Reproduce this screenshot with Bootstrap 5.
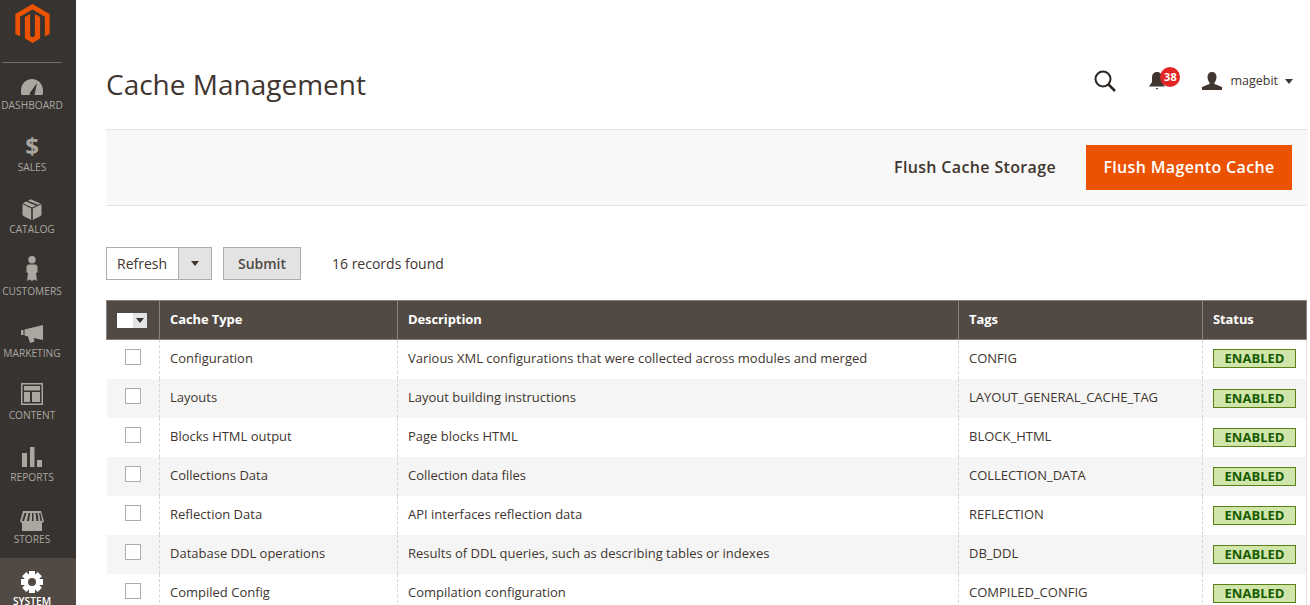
<!DOCTYPE html>
<html lang="en">
<head>
  <meta charset="UTF-8">
  <title>Cache Management</title>
  <link rel="stylesheet" href="https://cdn.jsdelivr.net/npm/bootstrap@5.3.0/dist/css/bootstrap.min.css">
  <style>
    html, body {
      height: 605px;
      overflow: hidden;
    }
    body {
      font-family: "Open Sans", sans-serif;
      font-size: 13px;
      color: #41362f;
      background: #fff;
    }
    .side-menu {
      width: 76px;
      height: 605px;
      background: #373330;
      flex-shrink: 0;
    }
    .side-logo {
      height: 63px;
      margin: 0 14px -1px 2px;
      padding-top: 4px;
      border-bottom: 1px solid #736d69;
    }
    .side-logo svg {
      display: block;
      margin-left: 13px;
    }
    .side-item {
      height: 62px;
      padding: 10px 12px 0 0;
      color: #aaa6a0;
      font-size: 10.2px;
      line-height: 14px;
      text-align: center;
      white-space: nowrap;
      text-decoration: none;
    }
    .side-item svg, .side-dollar {
      display: block;
      margin: 0 auto 2px;
      overflow: visible;
    }
    .side-dollar {
      height: 24px;
      font-size: 24px;
      font-weight: 700;
      line-height: 24px;
    }
    .side-active {
      background: #514943;
      color: #fff;
      font-weight: 600;
    }
    .main-area {
      width: 1231px;
      padding-left: 30px;
    }
    .head-row {
      height: 129px;
      padding-top: 64px;
    }
    .head-title {
      font-size: 28px;
      font-weight: 400;
      line-height: 40px;
      margin: 0;
      color: #41362f;
    }
    .head-tools {
      margin-right: 14px;
      margin-top: 5px;
    }
    .note-wrap {
      margin-left: 30px;
      margin-right: 36px;
      left: 1px;
    }
    .note-count {
      position: absolute;
      top: -4px;
      left: 12px;
      width: 20px;
      height: 20px;
      border-radius: 50%;
      background: #e22626;
      color: #fff;
      font-size: 11px;
      font-weight: 700;
      line-height: 20px;
      text-align: center;
    }
    .user-name {
      margin: 0 7px;
      font-size: 12.5px;
      color: #41362f;
    }
    .caret-down {
      width: 0;
      height: 0;
      border-left: 4px solid transparent;
      border-right: 4px solid transparent;
      border-top: 5px solid #41362f;
    }
    .action-bar {
      height: 77px;
      background: #f8f8f8;
      border-top: 1px solid #e3e3e3;
      border-bottom: 1px solid #e3e3e3;
      padding-right: 15px;
    }
    .flush-link {
      font-size: 16px;
      font-weight: 600;
      letter-spacing: .35px;
      color: #41362f;
      margin-right: 30px;
      padding-bottom: 2px;
    }
    .flush-main {
      width: 206px;
      height: 45px;
      padding: 0 0 2px;
      background: #eb5202;
      border: 1px solid #eb5202;
      color: #fff;
      font-size: 16px;
      font-weight: 600;
      letter-spacing: .35px;
      border-radius: 0;
    }
    .mass-row {
      height: 94px;
      padding-top: 41px;
    }
    .mass-select {
      width: 106px;
      height: 33px;
      border: 1px solid #adadad;
      background: #fff;
      font-size: 14px;
    }
    .mass-label {
      width: 71px;
      padding-left: 10px;
      line-height: 31px;
    }
    .mass-arrow {
      width: 33px;
      background: #e3e3e3;
      border-left: 1px solid #adadad;
    }
    .mass-submit {
      width: 78px;
      height: 33px;
      margin-left: 11px;
      padding: 0;
      background: #e3e3e3;
      border: 1px solid #adadad;
      border-radius: 0;
      color: #514943;
      font-size: 14px;
      font-weight: 600;
    }
    .records-text {
      margin-left: 31px;
      font-size: 14px;
      line-height: 33px;
    }
    .cache-grid {
      width: 1201px;
      table-layout: fixed;
      border-collapse: collapse;
      margin: 0;
    }
    .cache-grid th {
      height: 39px;
      padding: 0 10px;
      background: #514943;
      color: #fff;
      font-size: 13px;
      font-weight: 700;
      letter-spacing: -.1px;
      vertical-align: middle;
      border: 1px solid #8a837f;
    }
    .cache-grid td {
      height: 39px;
      padding: 0 10px;
      font-size: 13px;
      color: #41362f;
      vertical-align: middle;
      white-space: nowrap;
      border: 0;
      border-left: 1px dashed #d6d6d6;
      border-right: 1px dashed #d6d6d6;
      background: #fff;
    }
    .cache-grid tbody tr:first-child td {
      padding-bottom: 1px;
    }
    .cache-grid tbody tr:nth-child(even) td {
      background: #f5f5f5;
    }
    .cache-grid td:first-child {
      border-left: 0;
    }
    .cache-grid td:last-child {
      border-right: 1px solid #e3e3e3;
    }
    .col-check { width: 53px; }
    .col-type { width: 238px; }
    .col-desc { width: 561px; }
    .col-tags { width: 244px; }
    .head-check {
      width: 30px;
      height: 15px;
      background: #fff;
    }
    .head-check-arrow {
      width: 14px;
      margin-left: auto;
      background: #e3e3e3;
    }
    .head-check-arrow i {
      width: 0;
      height: 0;
      border-left: 4px solid transparent;
      border-right: 4px solid transparent;
      border-top: 5px solid #373330;
    }
    .row-check {
      display: block;
      width: 16px;
      height: 16px;
      margin: -4px 0 0 8px;
      border: 1px solid #adadad;
      background: #fff;
    }
    .status-on {
      display: block;
      width: 83px;
      height: 19px;
      background: #d0e5a9;
      border: 1px solid #5b8116;
      color: #185b00;
      font-size: 13px;
      font-weight: 700;
      line-height: 17px;
      text-align: center;
    }
  </style>
</head>
<body>
<div class="d-flex">
  <nav class="side-menu">
    <div class="side-logo">
      <svg width="35" height="40" viewBox="0 0 36 42">
        <path fill="#eb5202" d="M18 0 36 10.400V31.400L31 34.200V13.300L18 5.800 5 13.300V34.200L0 31.400V10.400Z"/>
        <path fill="#eb5202" d="M15.500 10.500V33.500L18 35 20.500 33.500V10.500L26 13.700V36.300L18 41 10 36.300V13.700Z"/>
      </svg>
    </div>
    <a class="side-item d-block" href="#">
      <svg width="24" height="24" viewBox="0 0 24 24"><path fill="#aaa6a0" d="M1.500 23C1 21 1 20 1 18.500 1 12 6 7 12 7S23 12 23 18.500C23 20 23 21 22.500 23H14.500L17 11 10.500 20C9.500 21 9.500 22 10 23Z"/></svg>
      DASHBOARD
    </a>
    <a class="side-item d-block" href="#">
      <span class="side-dollar">$</span>
      SALES
    </a>
    <a class="side-item d-block" href="#">
      <svg width="24" height="24" viewBox="0 0 24 24"><path fill="#aaa6a0" d="M2.500 8 11.200 12.500V24L3.500 20C2.800 19.500 2.500 19 2.500 18.500ZM21.500 8 12.800 12.500V24L20.500 20C21.200 19.500 21.500 19 21.500 18.500ZM8 4.700 10.500 3.300 20.500 7.500 18 8.800ZM6.300 5.500 16.200 9.700 12 11.500 2.800 7.200Z"/></svg>
      CATALOG
    </a>
    <a class="side-item d-block" href="#">
      <svg width="24" height="24" viewBox="0 0 24 24"><circle cx="12" cy="1.700" r="3.700" fill="#aaa6a0"/><path fill="#aaa6a0" d="M9 6.500H15C16.500 6.500 17.500 7.500 17.500 9V14.500L16 15 17 23 14.500 21.500 12 23 9.500 21.500 7 23 8 15 6.500 14.500V9C6.500 7.500 7.500 6.500 9 6.500Z"/></svg>
      CUSTOMERS
    </a>
    <a class="side-item d-block" href="#">
      <svg width="24" height="24" viewBox="0 0 24 24"><path fill="#aaa6a0" d="M1 10H3.500V15H1ZM4.500 9.500 23 5V20L13.500 18 14.500 21.500 10 23 8 16.500 4.500 15.500Z"/></svg>
      MARKETING
    </a>
    <a class="side-item d-block" href="#">
      <svg width="24" height="24" viewBox="0 0 24 24"><path fill="#aaa6a0" fill-rule="evenodd" d="M1 1H23V23H1ZM2.500 2.500V21.500H21.500V2.500Z"/><path fill="#aaa6a0" d="M4 4H20V8.500H4ZM4 10H10V20H4ZM12 10H20V20H12Z"/></svg>
      CONTENT
    </a>
    <a class="side-item d-block" href="#">
      <svg width="24" height="24" viewBox="0 0 24 24"><path fill="#aaa6a0" d="M2 9H7V23H2ZM10 3H14.500V23H10ZM17 16H22V23H17Z"/></svg>
      REPORTS
    </a>
    <a class="side-item d-block" href="#">
      <svg width="24" height="24" viewBox="0 0 24 24"><path fill="#aaa6a0" fill-rule="evenodd" d="M3 5H21L24 15.500 22 17V25H2V17L0 15.500ZM4.500 7 2 15H4L6.500 7ZM8.500 7 7 15H9L10.200 7ZM12 7V15H13.500L13.500 7ZM15.500 7 16.500 15H18.500L17.500 7ZM19 7 20.500 15H22.200L20.500 7Z"/></svg>
      STORES
    </a>
    <a class="side-item side-active d-block" href="#">
      <svg width="24" height="24" viewBox="0 0 24 24">
        <g fill="#fff">
          <rect x="9" y="3" width="6" height="22"/>
          <rect x="9" y="3" width="6" height="22" transform="rotate(45 12 14)"/>
          <rect x="9" y="3" width="6" height="22" transform="rotate(90 12 14)"/>
          <rect x="9" y="3" width="6" height="22" transform="rotate(135 12 14)"/>
        </g>
        <circle cx="12" cy="14" r="6" fill="none" stroke="#fff" stroke-width="4"/>
        <circle cx="12" cy="14" r="4" fill="#514943"/>
      </svg>
      SYSTEM
    </a>
  </nav>

  <main class="main-area">
    <div class="head-row d-flex justify-content-between align-items-start">
      <h1 class="head-title">Cache Management</h1>
      <div class="head-tools d-flex align-items-center">
        <svg width="24" height="24" viewBox="0 0 24 24" fill="none" stroke="#2b2622"><circle cx="10" cy="10" r="7.500" stroke-width="2"/><path d="M15.500 15.500 22 22" stroke-width="2.500"/></svg>
        <div class="note-wrap position-relative">
          <svg class="d-block" width="18" height="20" viewBox="0 0 18 20"><path fill="#41362f" d="M9 1C12.500 1 14 3.500 14 7V11L17 15.500H1L4 11V7C4 3.500 5.500 1 9 1ZM7.500 17H10.500L9 18.500Z"/></svg>
          <span class="note-count">38</span>
        </div>
        <svg width="22" height="20" viewBox="0 0 22 20"><path fill="#41362f" d="M11 1C14 1 15.500 3 15.500 6 15.500 8.500 14.500 10.500 13.500 11.500V13L21 16V19H1V16L8.500 13V11.500C7.500 10.500 6.500 8.500 6.500 6 6.500 3 8 1 11 1Z"/></svg>
        <span class="user-name">magebit</span>
        <span class="caret-down"></span>
      </div>
    </div>

    <div class="action-bar d-flex justify-content-end align-items-center">
      <span class="flush-link">Flush Cache Storage</span>
      <button class="btn flush-main" type="button">Flush Magento Cache</button>
    </div>

    <div class="mass-row d-flex align-items-start">
      <div class="mass-select d-flex">
        <div class="mass-label">Refresh</div>
        <div class="mass-arrow d-flex align-items-center justify-content-center"><span class="caret-down"></span></div>
      </div>
      <button class="btn mass-submit" type="button">Submit</button>
      <span class="records-text">16 records found</span>
    </div>

    <table class="table cache-grid">
      <thead>
        <tr>
          <th class="col-check"><div class="head-check d-flex"><div class="head-check-arrow d-flex align-items-center justify-content-center"><i></i></div></div></th>
          <th class="col-type">Cache Type</th>
          <th class="col-desc">Description</th>
          <th class="col-tags">Tags</th>
          <th>Status</th>
        </tr>
      </thead>
      <tbody>
        <tr><td><span class="row-check"></span></td><td>Configuration</td><td>Various XML configurations that were collected across modules and merged</td><td>CONFIG</td><td><span class="status-on">ENABLED</span></td></tr>
        <tr><td><span class="row-check"></span></td><td>Layouts</td><td>Layout building instructions</td><td>LAYOUT_GENERAL_CACHE_TAG</td><td><span class="status-on">ENABLED</span></td></tr>
        <tr><td><span class="row-check"></span></td><td>Blocks HTML output</td><td>Page blocks HTML</td><td>BLOCK_HTML</td><td><span class="status-on">ENABLED</span></td></tr>
        <tr><td><span class="row-check"></span></td><td>Collections Data</td><td>Collection data files</td><td>COLLECTION_DATA</td><td><span class="status-on">ENABLED</span></td></tr>
        <tr><td><span class="row-check"></span></td><td>Reflection Data</td><td>API interfaces reflection data</td><td>REFLECTION</td><td><span class="status-on">ENABLED</span></td></tr>
        <tr><td><span class="row-check"></span></td><td>Database DDL operations</td><td>Results of DDL queries, such as describing tables or indexes</td><td>DB_DDL</td><td><span class="status-on">ENABLED</span></td></tr>
        <tr><td><span class="row-check"></span></td><td>Compiled Config</td><td>Compilation configuration</td><td>COMPILED_CONFIG</td><td><span class="status-on">ENABLED</span></td></tr>
      </tbody>
    </table>
  </main>
</div>
<script src="https://cdn.jsdelivr.net/npm/bootstrap@5.3.0/dist/js/bootstrap.bundle.min.js"></script>
</body>
</html>
